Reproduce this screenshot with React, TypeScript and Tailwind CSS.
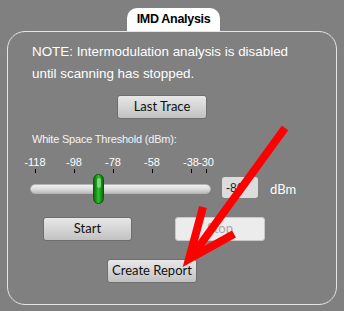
import React from "react";

const ticks = [
  { label: "-118", x: 5 },
  { label: "-98", x: 44 },
  { label: "-78", x: 83 },
  { label: "-58", x: 122 },
  { label: "-38", x: 161 },
  { label: "-30", x: 176 },
];

function Btn({ children, className = "" }: { children: React.ReactNode; className?: string }) {
  return (
    <div
      className={
        "flex items-center justify-center rounded-[3px] border border-[#6e6e6e] bg-gradient-to-b from-[#e8e8e8] to-[#c2c2c2] text-[13px] text-[#101010] " +
        className
      }
      style={{ fontFamily: "Lato, 'Liberation Sans', sans-serif" }}
    >
      {children}
    </div>
  );
}

export default function App() {
  return (
    <div
      className="relative w-[344px] h-[311px] overflow-hidden bg-[#808080] flex flex-col"
      style={{ fontFamily: "'Liberation Sans', Arial, sans-serif" }}
    >
      {/* Tab */}
      <div className="ml-[127px] mt-[8px] w-[93px] h-[23px] bg-white rounded-t-[10px] flex items-center justify-center">
        <span className="text-[12.5px] font-bold text-black tracking-[-0.3px]">IMD Analysis</span>
      </div>

      {/* Panel */}
      <div className="mx-[7px] h-[274px] border border-[#e4e4e4] rounded-[18px] flex flex-col">
        <div className="ml-[24px] mt-[9px] text-[13.4px] leading-[22px] text-white">
          <div>NOTE: Intermodulation analysis is disabled</div>
          <div>until scanning has stopped.</div>
        </div>

        <Btn className="ml-[109px] mt-[10px] w-[90px] h-[24px]">Last Trace</Btn>

        <div className="ml-[24px] mt-[13px] text-[11px] leading-[14px] tracking-[-0.2px] text-[#f4f4f4]">
          White Space Threshold (dBm):
        </div>

        <div className="flex items-start mt-[9px]">
          <div className="relative ml-[22px] w-[182px] h-[50px]">
            {ticks.map((t) => (
              <React.Fragment key={t.label}>
                <div
                  className="absolute top-[1px] text-[11px] leading-[13px] text-white -translate-x-1/2"
                  style={{ left: t.x }}
                >
                  {t.label}
                </div>
                <div className="absolute top-[14px] w-px h-[4px] bg-black" style={{ left: t.x }} />
              </React.Fragment>
            ))}
            <div className="absolute left-0 top-[29px] w-[181px] h-[10px] rounded-full bg-gradient-to-b from-[#f0f0f0] via-[#dedede] to-[#bcbcbc] border border-[#b4b4b4]" />
            <div className="absolute left-[63px] top-[19px] w-[11px] h-[30px] rounded-full bg-gradient-to-r from-[#0a6e0a] via-[#2fc02f] to-[#0a6e0a] border border-[#0b5a0b] flex justify-center">
              <div className="mt-[3px] w-[4px] h-[10px] rounded-full bg-[#9ee89e] opacity-70" />
            </div>
          </div>
          <div className="ml-[10px] mt-[22px] w-[36px] h-[21px] rounded-[3px] bg-[#dcdcdc] flex items-center pl-[4px] text-[12px] text-[#1a1a40]">
            -86
          </div>
          <div className="ml-[12px] mt-[27px] text-[13px] leading-[14px] text-white" style={{ fontFamily: "Lato, 'Liberation Sans', sans-serif" }}>
            dBm
          </div>
        </div>

        <div className="flex mt-[12px]">
          <Btn className="ml-[35px] w-[89px] h-[24px]">Start</Btn>
          <div
            className="ml-[43px] w-[90px] h-[24px] rounded-[3px] border border-[#c8c8c8] bg-[#ececec] flex items-center justify-center text-[13px] text-[#a8a8a8]"
            style={{ fontFamily: "Lato, 'Liberation Sans', sans-serif" }}
          >
            Stop
          </div>
        </div>

        <Btn className="ml-[99px] mt-[18px] w-[90px] h-[24px]">Create Report</Btn>
      </div>

      {/* Red arrow annotation */}
      <svg className="absolute left-0 top-0" width="344" height="311" viewBox="0 0 344 311">
        <line x1="285" y1="128" x2="192" y2="256" stroke="#ff0000" strokeWidth="8" />
        <polyline
          points="203,207 189,259 234,234"
          fill="none"
          stroke="#ff0000"
          strokeWidth="8"
          strokeLinejoin="miter"
          strokeMiterlimit="10"
        />
      </svg>
    </div>
  );
}
